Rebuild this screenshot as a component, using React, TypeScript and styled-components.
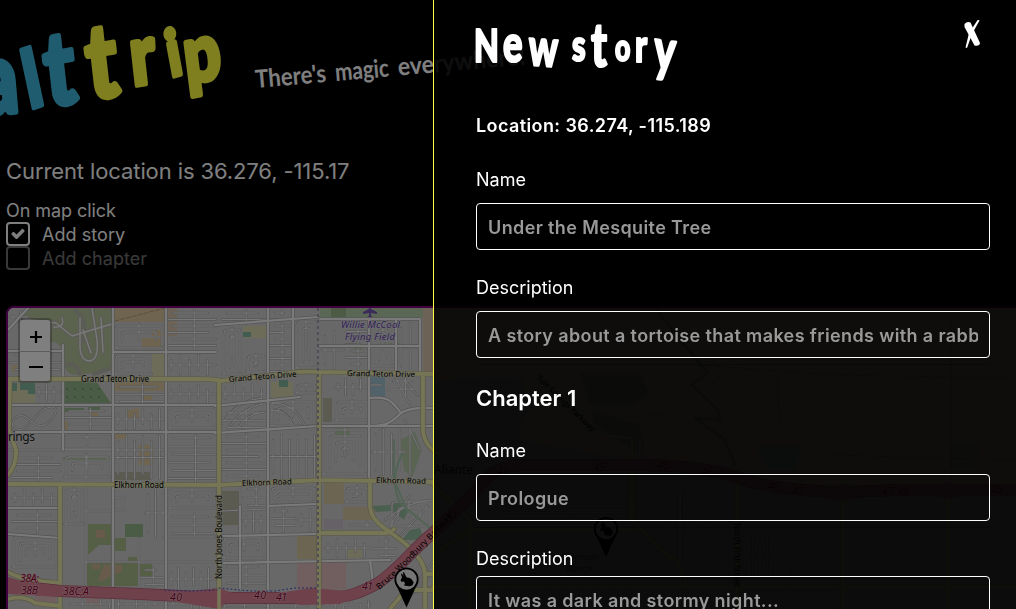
import React from "react";
import styled, { createGlobalStyle } from "styled-components";
import { FaCheck } from "react-icons/fa";

const GlobalStyle = createGlobalStyle`
  * { box-sizing: border-box; }
  html, body { margin: 0; background: #000; overflow: hidden; }
  body { font-family: Inter, sans-serif; color: #fff; }
`;

const Page = styled.main`
  height: 609px;
  overflow: hidden;
  display: flex;
  flex-direction: column;
`;
const Header = styled.header`
  height: 158px;
  flex: none;
`;
const Lettering = styled.svg`
  display: block;
  overflow: visible;
  font-family: Lato, sans-serif;
  font-weight: 900;
  stroke-linejoin: round;
`;
const Intro = styled.section`
  padding: 0 6px;
  height: 148px;
  flex: none;
`;
const Current = styled.p`
  margin: 0;
  font-size: 22px;
  line-height: 27px;
  letter-spacing: -0.1px;
`;
const Mode = styled.div`
  margin-top: 14px;
  font-size: 18px;
  line-height: 23px;
  letter-spacing: -0.06px;
`;
const Option = styled.label<{ $disabled?: boolean }>`
  display: flex;
  align-items: center;
  gap: 12px;
  height: 24px;
  letter-spacing: 0.05px;
  opacity: ${(p) => (p.$disabled ? 0.45 : 1)};
`;
const OptionText = styled.span`
  padding-top: 2px;
  line-height: 24px;
`;
const Box = styled.span`
  display: grid;
  place-items: center;
  width: 24px;
  height: 24px;
  border: 2px solid #fff;
  border-radius: 4px;
  font-size: 12px;
  line-height: 1;
  svg { stroke: #fff; stroke-width: 50; overflow: visible; }
`;
const MapFrame = styled.section`
  position: relative;
  margin-left: 6px;
  width: 1030px;
  height: 400px;
  flex: none;
  border: 2px solid purple;
  border-radius: 8px;
  overflow: hidden;
  background: #f0ecdc;
`;
const MapArt = styled.svg`
  display: block;
  font-family: "Noto Sans", sans-serif;
`;
const ZoomControl = styled.div`
  position: absolute;
  left: 10px;
  top: 10px;
  border: 2px solid rgba(0, 0, 0, 0.25);
  border-radius: 4px;
  background: #fff;
  background-clip: padding-box;
`;
const ZoomButton = styled.button`
  display: grid;
  place-items: center;
  width: 30px;
  height: 31px;
  padding: 2px 0 0 2px;
  border: 0;
  background: none;
  color: #000;
  & + & { height: 30px; padding-top: 0; border-top: 1px solid #bbb; }
`;
const Shade = styled.div`
  position: fixed;
  inset: 0;
  background: rgba(0, 0, 0, 0.5);
`;
const Drawer = styled.aside`
  position: fixed;
  top: 0;
  right: 0;
  bottom: 0;
  width: 583px;
  padding: 20px 26px 0 42px;
  border-left: 1px solid #ffff40;
  background: rgba(0, 0, 0, 0.89);
  overflow: hidden;
`;
const DrawerHead = styled.div`
  display: flex;
  justify-content: space-between;
  height: 92px;
`;
const Title = styled.h1`
  margin: 0;
`;
const Close = styled.button`
  width: 36px;
  height: 30px;
  padding: 0;
  border: 0;
  background: none;
`;
const Location = styled.p`
  margin: 0;
  height: 54px;
  font-size: 18px;
  font-weight: 600;
  line-height: 28px;
  letter-spacing: 0.4px;
`;
const Field = styled.div<{ $tight?: boolean }>`
  display: flex;
  flex-direction: column;
  gap: ${(p) => (p.$tight ? 5 : 11)}px;
  height: 108px;
`;
const Label = styled.label`
  font-size: 18px;
  line-height: 28px;
  height: 26px;
`;
const Input = styled.input`
  height: 47px;
  flex: none;
  padding: 2px 11px 0;
  border: 1px solid #fff;
  border-radius: 4px;
  background: none;
  font: 600 18px Inter, sans-serif;
  letter-spacing: 0.38px;
  color: #fff;
  outline: none;
  &::placeholder { color: #999; opacity: 1; }
`;
const Rule = styled.div`
  height: 1px;
  margin-top: -5px;
  background: rgba(0, 0, 0, 0.4);
`;
const Chapter = styled.h2`
  margin: 0;
  height: 55px;
  font-size: 22px;
  line-height: 32px;
  font-weight: 600;
`;

type G = [ch: string, x: number, y: number, size: number, rot?: number];

function Letters({ items, fill, sx = 1, stroke = 1 }: { items: G[]; fill: string; sx?: number; stroke?: number }) {
  return (
    <text fill={fill} stroke={fill} strokeWidth={stroke} transform={`scale(${sx} 1)`}>
      {items.map(([ch, x, y, size, rot = 0], i) => (
        <tspan key={i} x={x / sx} y={y} fontSize={size} rotate={rot}>{ch}</tspan>
      ))}
    </text>
  );
}

/* ---- map geometry ---- */
type Block = [x: number, y: number, w: number, h: number, kind: number];
const blocks: Block[] = [
  [10, 310, 18, 14, 0], [10, 352, 50, 24, 1], [114, 324, 50, 26, 2], [168, 310, 48, 40, 1],
  [114, 354, 38, 22, 2], [168, 354, 48, 22, 0], [36, 382, 24, 20, 0], [115, 384, 50, 20, 1],
  [168, 384, 48, 20, 0], [64, 408, 48, 22, 1], [115, 408, 50, 22, 0], [168, 408, 48, 22, 2],
  [62, 435, 50, 16, 2], [115, 435, 50, 45, 0], [168, 435, 50, 48, 1], [12, 455, 48, 26, 1],
  [64, 455, 46, 24, 2], [12, 488, 46, 20, 0], [12, 512, 46, 20, 1], [12, 535, 46, 34, 2],
  [64, 488, 20, 38, 2], [145, 488, 20, 50, 0], [168, 488, 48, 22, 2], [168, 514, 48, 22, 1],
  [168, 567, 48, 24, 0], [140, 567, 24, 22, 1], [70, 598, 145, 12, 0],
  [222, 310, 44, 14, 1], [222, 328, 20, 48, 2], [246, 354, 20, 20, 2], [270, 310, 22, 64, 1], [295, 320, 22, 50, 2],
  [222, 383, 44, 22, 0], [295, 383, 22, 12, 2], [222, 410, 44, 20, 1], [270, 400, 46, 28, 2],
  [222, 434, 44, 45, 1], [270, 434, 46, 45, 0], [322, 330, 22, 40, 0], [346, 322, 22, 48, 1],
  [371, 322, 24, 46, 2], [398, 322, 23, 50, 0], [335, 378, 34, 18, 0], [335, 400, 34, 22, 2],
  [388, 378, 32, 18, 1], [322, 428, 46, 48, 2], [372, 428, 34, 48, 0], [243, 486, 24, 20, 1],
  [243, 510, 24, 22, 0], [222, 536, 44, 24, 2], [222, 564, 44, 22, 1], [270, 486, 46, 18, 2],
  [270, 508, 25, 24, 1], [298, 508, 18, 24, 0], [345, 486, 24, 18, 2], [345, 522, 40, 9, 1],
  [325, 538, 48, 20, 0], [390, 500, 38, 28, 2], [374, 538, 22, 22, 1], [222, 603, 45, 8, 2],
  [270, 603, 46, 8, 1], [324, 600, 46, 10, 0],
  [440, 380, 82, 80, 2], [500, 490, 130, 36, 1], [640, 490, 92, 40, 0], [640, 535, 92, 45, 2],
  [742, 535, 96, 46, 0], [850, 535, 92, 46, 1], [742, 590, 96, 20, 2], [480, 590, 150, 20, 0], [480, 535, 70, 46, 1],
];
function lanes([x, y, w, h, kind]: Block, seed: number): string {
  let d = "";
  const step = 7.5 + (seed % 3) * 0.8;
  if (kind === 0) {
    for (let i = 0, a = x + 3; a < x + w - 1; a += step, i++) {
      d += `M${a} ${y + (i % 2 ? 1 : 6)}V${y + h - (i % 3 ? 1 : 6)}`;
    }
    d += `M${x} ${y + h / 2}H${x + w}`;
  } else if (kind === 1) {
    for (let i = 0, b = y + 3; b < y + h; b += step - 1, i++) {
      d += `M${x + (i % 2 ? 0 : 5)} ${b}H${x + w - (i % 3 ? 0 : 8)}`;
    }
    d += `M${x + w * 0.55} ${y}V${y + h}`;
  } else {
    const m = Math.min(w, h);
    for (let k = 2; k < m / 2; k += 6) {
      d += `M${x + k} ${y + h - k}V${y + k + 3}Q${x + k} ${y + k} ${x + k + 3} ${y + k}H${x + w - k}V${y + h - k - 2}`;
    }
    d += `M${x + w / 2} ${y}V${y + h * 0.6}M${x} ${y + h - 2}H${x + w}`;
  }
  return d;
}
const minor = blocks.map(lanes).join("") +
  "M12 428C12 415 22 412 30 420S46 428 54 416S46 404 36 416S24 432 14 428M8 450H216M86 454V590M86 511H112V590M86 562H215M139 538V590M166 537H215M114 498H124V510H114ZM222 424Q236 400 262 398M230 426Q242 408 262 404M238 428Q246 414 264 412M270 410Q288 408 294 428M270 403Q296 402 306 428M370 385H382M240 486V560M222 511L267 509M434 560L405 600M430 575L398 609M385 520Q410 500 433 500M390 526L410 495M400 536L428 506M400 375L418 396M394 375L410 405M405 420L420 450M410 430V475M380 430V475M440 465C460 435 520 440 540 390M455 380H520V420";
const major =
  "M63 345V450M63 351H8M113 308V609M166 308V609M8 405H216M8 432H216M113 352H216M8 508H60M8 534L60 538M215 325L318 317M268 308V609M293 308V370M369 319V480M396 320V370M320 319H420V372M215 406L300 397M215 433L318 426H433M369 398C390 396 392 402 401 413C390 424 385 426 369 426M401 413Q410 407 433 408M320 346H420M268 506L316 504M222 536L316 534M222 563L390 560M370 560L374 590M240 506V590M64 595H165L219 590M596 430Q610 438 632 438M8 330L28 308M640 438V464M680 490V609";
const primary =
  "M8 379H200Q216 379 220 381L290 373Q304 371 320 372L433 374M8 484L219 485L320 480L433 482M219 380V609M319 372V609M60 484V609M423 374V430Q424 446 440 455M370 480V505C370 525 392 530 410 548Q425 562 425 575V609M320 533H385Q392 533 394 529M10 379L9 430L16 450Q17 464 8 475M8 572Q20 580 60 583M8 599Q25 595 35 603L60 606M425 574H433M390 609L406 590H433M632 440V520L660 550Q685 562 685 585M433 484L470 520V609M440 550L470 530H632M433 587H1016M737 485V609M843 485V609M948 485V609";
const freeway = "M0 584L60 591L140 594L219 598H320C350 598 362 592 378 583C398 570 412 550 433 533L475 492Q492 466 520 465H650Q710 466 748 481Q780 490 841 492L897 490H1024";

const patches: [string, string][] = [
  ["M25 308H112V364Q110 374 98 372L80 375Q66 376 64 365V350L56 342H50L52 320L22 320Z", "#b6c49b"],
  ["M113 308H165V322H113ZM142 338H163V349H142ZM152 330H164V336H152ZM115 382H164V391H115ZM142 393H152V400H142ZM126 411L139 408V419H126ZM139 445H153V465H139ZM90 412H98V417H90ZM63 421H68V430H63ZM115 434H127V439H115ZM12 365H17V372H12Z", "#ddc89e"],
  ["M166 308H177V336H166Z", "#d8c6ad"],
  ["M62 381H96L111 403H62ZM64 408H84V412H64ZM88 407H100V412H88ZM125 524H143V537H125Z", "#94b88b"],
  ["M12 383H35V403H12ZM152 353H164V378H152ZM271 382H293V399H271ZM243 326H266V338H243ZM346 547H362V558H346Z", "#dad9b3"],
  ["M12 383H17V391H12ZM20 383H35V394H28V390H20ZM279 380H288V387H279ZM243 332H251V337H243Z", "#84b89f"],
  ["M88 524H112V545H99L88 555ZM114 538H126V551H114ZM87 563H138V586H87ZM140 564H152V577H140ZM128 557H137V562H128Z", "#abbf8d"],
  ["M96 530H105V538H96ZM92 564H100V569H92ZM104 565H122V572L112 575L103 581L98 580Z", "#d1b799"],
  ["M320 308H423V317H320Z", "#b5cea8"], ["M331 308H346V317H331Z", "#9bb78a"],
  ["M423 308H434V372H423Z", "#d8c6ad"],
  ["M371 376H385V397H371Z", "#a2c4d4"],
  ["M323 398H332V422H323ZM222 491H240V525H222ZM115 472H150V480H115Z", "#b7b6a2"],
  ["M324 482H344V504H324ZM343 507H375V520H343ZM297 536H318V559H297Z", "#d8caa2"],
  ["M297 562H346V589H297ZM35 594H56V603H35ZM86 598H101V606H86Z", "#e0bfbc"],
  ["M324 519H343V529H324Z", "#cdc3cf"],
  ["M335 428H350V435H335ZM354 344H362V353H354ZM380 343H402V348H380ZM400 440L415 432L422 450L412 478L404 470ZM63 457H110V460H63Z", "#b3cba5"],
  ["M402 540L410 530L420 528L424 540ZM372 506L390 505L400 500L408 510L404 520L392 511L376 512Z", "#96bea2"],
  ["M580 373H640L650 395L632 405H590ZM590 410L640 425L645 450H632L596 425Z", "#c6c9ae"],
  ["M755 446H800L796 470H768Z", "#c5d2dc"], ["M950 443H980V470H950Z", "#d0cdb9"],
];

type L = [text: string, x: number, y: number, len: number, rot?: number];
const roadNames: L[] = [
  ["Grand Teton Drive", 81, 382, 68, 0], ["Grand Teton Drive", 229, 382, 68, -4.5], ["Grand Teton Drive", 347, 376, 68, 1],
  ["Elkhorn Road", 114, 488, 50, 0], ["Elkhorn Road", 242, 486, 50, -2], ["Elkhorn Road", 376, 483, 50, 1],
  ["North Jones Boulevard", 222, 579, 84, -90], ["North Fifth Street", 734, 523, 64, 90],
  ["Tule Springs Parkway", 536, 378, 78, 44],
];
const exits: L[] = [
  ["38A;", 20, 582, 19], ["38B", 21, 594, 17], ["38C;A", 63, 595, 26], ["40", 170, 601, 12], ["40", 254, 599, 12], ["41", 276, 601, 11], ["41", 362, 590, 11],
  ["43", 446, 518, 11], ["43", 497, 475, 11], ["45", 594, 471, 11], ["45", 658, 469, 11], ["46", 701, 475, 11], ["46", 768, 490, 11],
  ["47", 792, 495, 11], ["47", 882, 495, 11], ["48", 898, 496, 11], ["48", 992, 494, 11],
];

function Pin({ x, y }: { x: number; y: number }) {
  return (
    <g transform={`translate(${x} ${y})`}>
      <path d="M-11 4L0 28L11 4Z" fill="#000" />
      <circle r="11.2" fill="#ededed" stroke="#000" strokeWidth="1.8" />
      <path d="M-3.600 -7.500Q-2 -7.500 -.8 -3.500L.4 -2Q5 -2 6.200 1.500L7.200 3L6 5.500Q4 7.300 1 6.500L-2.500 6L-1.500 4L-2.500 2L-4.800 2.200Q-6.500 1.500 -5.500 -.5L-4.500 -2L-5.500 -5.500L-4.600 -6L-3 -3.500Z" fill="#000" />
    </g>
  );
}

function StreetMap() {
  return (
    <MapArt width="1024" height="396" viewBox="8 308 1024 396" aria-label="Street map">
      <path d="M8 308H433L525 380L520 440L632 460H1030V704H8Z" fill="#d2d1d1" />
      <path d="M433 308H1030V490H800L700 465L632 460L600 430L525 380H433Z" fill="#f0ecdc" />
      {patches.map(([d, f], i) => <path key={i} d={d} fill={f} />)}
      <g fill="none" strokeLinecap="round" strokeLinejoin="round">
        <path d="M24 319L56 323L72 336L95 329L112 324M62 318Q65 328 54 327M80 318V345Q80 361 90 361Q99 359 97 340L92 308M83 330L91 353M101 318L103 352M64 366Q75 360 80 374M94 374L112 368M76 311Q88 320 84 341" stroke="#b9b9ae" strokeWidth="4" />
        <path d="M24 319L56 323L72 336L95 329L112 324M62 318Q65 328 54 327M80 318V345Q80 361 90 361Q99 359 97 340L92 308M83 330L91 353M101 318L103 352" stroke="#f0f0f0" strokeWidth="1.4" />
        <path d={minor} stroke="#b0afaf" strokeWidth="2.4" />
        <path d={minor} stroke="#f0f0f0" strokeWidth="1" />
        <path d={major} stroke="#aaa9a9" strokeWidth="3.6" />
        <path d={major} stroke="#f4f4f4" strokeWidth="2.2" />
        <path d="M402 454Q389 480 400 503L430 528M394 440V480L408 512" stroke="#a5c9ab" strokeWidth="2" />
        <path d={primary} stroke="#b0b086" strokeWidth="5.2" />
        <path d={primary} stroke="#ecebac" strokeWidth="3.8" />
        <path d={freeway} stroke="#b8607a" strokeWidth="12" />
        <path d={freeway} stroke="#dc8397" strokeWidth="10.5" />
        <path d="M8 577L40 586L60 597L8 594ZM165 594L219 588L235 594L219 609L165 600ZM270 594L312 588L350 591L378 583L340 604L300 605ZM600 464L632 459L664 464L632 470ZM800 492L841 484L880 490L841 501ZM912 490L948 482L982 490L948 499Z" fill="#dc8397" strokeLinecap="butt" />
        <path d="M219 584V609M319 584V609" stroke="#ecebac" strokeWidth="3.5" />
        <path d="M318 308V609" stroke="#a49caf" strokeWidth="2" strokeDasharray="3 3" strokeLinecap="butt" />
        <path d="M165 590L190 591L217 590M219 588L250 591L275 591L295 588H317" stroke="#3944cc" strokeWidth="1" strokeDasharray="1 3" />
        <path d="M115 321L165 308" stroke="#a98c66" strokeWidth=".7" strokeDasharray="4 2" />
        <path d="M660 308L700 345L722 372L705 395M592 420L660 415L700 455M700 365L830 375L1016 378M845 400L810 445M830 455L1016 460M951 320V480M777 380L780 425" stroke="#aba78c" strokeWidth="1" strokeDasharray="6 3" />
        <path d="M656 308L668 325L708 373L692 385L718 410L720 420L695 418L725 440L735 465" stroke="#bbb695" strokeWidth="3" />
      </g>
      <g fill="#54754e">
        {[389, 397].map((y) => [67, 75, 83, 91, 99].map((x) => <circle key={`${x}-${y}`} cx={x} cy={y} r=".7" />))}
      </g>
      <path d="M369 305L371 309L377 312V314L371 313V316L373 317H367L369 316V313L363 314V312L369 309Z" fill="#7556b5" />
      <g fontSize="8" fill="#000" stroke="#dddcc5" strokeWidth="1.2" paintOrder="stroke">
        {roadNames.map(([t, x, y, len, rot = 0], i) => (
          <text key={i} textLength={len} transform={`translate(${x} ${y}) rotate(${rot})`}>{t}</text>
        ))}
      </g>
      <g fontSize="10.5" fontStyle="italic" fill="#960032" stroke="#e4bcc4" strokeWidth="1.2" paintOrder="stroke">
        {exits.map(([t, x, y, len], i) => <text key={i} x={x} y={y} textLength={len}>{t}</text>)}
      </g>
      <g fontSize="9.5" fontStyle="italic" fill="#6040ac" stroke="#dcd9e2" strokeWidth="1" paintOrder="stroke">
        <text x="341" y="328" textLength="59">Willie McCool</text>
        <text x="345" y="340" textLength="50">Flying Field</text>
      </g>
      <path id="beltway" d="M379 590Q400 572 414 557T474 496" fill="none" />
      <text fontSize="8.5" fill="#000"><textPath href="#beltway" textLength="104">Bruce Woodbury Beltway</textPath></text>
      <g fontSize="12" fill="#222" stroke="#ddd" strokeWidth="1" paintOrder="stroke">
        <text x="8" y="440.500" textLength="27">rings</text>
        <text x="434" y="474" textLength="39">Aliante</text>
      </g>
      <g fontSize="9.500" fontStyle="italic" fill="#666">
        <text x="561" y="560" textLength="39">Eldorado</text>
        <text x="566" y="572">Ranch</text>
      </g>
      <Pin x={406.500} y={579.500} />
      <Pin x={606} y={529} />
    </MapArt>
  );
}

function SketchField({ label, hint, tight }: { label: string; hint: string; tight?: boolean }) {
  return (
    <Field $tight={tight}>
      <Label>{label}</Label>
      <Input placeholder={hint} aria-label={label} />
      <Rule />
    </Field>
  );
}

export default function App() {
  return (
    <>
      <GlobalStyle />
      <Page>
        <Header>
          <Lettering width="540" height="130" viewBox="0 0 540 130">
            <Letters fill="#40b8e0" sx={0.8} stroke={5} items={[["a", -21, 117, 102, -6], ["l", 30, 109, 80, -15], ["t", 48, 107, 103, -8]]} />
            <Letters fill="#ffff40" sx={0.8} stroke={5} items={[["t", 90, 100, 104, -8], ["r", 133, 86, 84, -8], ["i", 171, 77, 64, -13], ["p", 187, 84, 80, -9]]} />
            <g transform="translate(256 88) rotate(-5)" fontSize="25" fill="#fff" fontWeight="700">
              <text textLength="71" lengthAdjust="spacingAndGlyphs">There's</text>
              <text x="80" textLength="54" lengthAdjust="spacingAndGlyphs">magic</text>
              <text x="143" textLength="128" lengthAdjust="spacingAndGlyphs">everywhere!</text>
            </g>
          </Lettering>
        </Header>
        <Intro>
          <Current>Current location is 36.276, -115.17</Current>
          <Mode>
            On map click
            <Option><Box><FaCheck /></Box><OptionText>Add story</OptionText></Option>
            <Option $disabled><Box /><OptionText>Add chapter</OptionText></Option>
          </Mode>
        </Intro>
        <MapFrame>
          <StreetMap />
          <ZoomControl>
            <ZoomButton aria-label="Zoom in">
              <svg width="14" height="14"><path d="M1 7H13M7 1V13" stroke="#000" strokeWidth="2.2" /></svg>
            </ZoomButton>
            <ZoomButton aria-label="Zoom out">
              <svg width="14" height="14"><path d="M0 7H14" stroke="#000" strokeWidth="2.2" /></svg>
            </ZoomButton>
          </ZoomControl>
        </MapFrame>
      </Page>
      <Shade />
      <Drawer>
        <DrawerHead>
          <Title>
            <Lettering width="204" height="64" viewBox="476 20 204 64">
              <Letters fill="#fff" sx={0.7} stroke={2.2} items={[
                ["N", 474, 62, 46], ["e", 503, 62, 52], ["w", 528, 65, 52, 3], ["s", 572, 61, 44],
                ["t", 591, 67, 61], ["o", 615, 61, 38], ["r", 635, 62, 46], ["y", 653, 69, 58, 5],
              ]} />
            </Lettering>
          </Title>
          <Close aria-label="Close">
            <svg width="36" height="30" viewBox="954 20 36 30" fill="#fff">
              <path d="M964.500 24Q967 21 970.500 22.500L980 43Q979.500 46.500 974.500 45.500L971 39L964.500 27Z" />
              <path d="M978 19.500L979.500 20.500L972 34L967 48L965.500 47.500L969 33Z" />
            </svg>
          </Close>
        </DrawerHead>
        <Location>Location: 36.274, -115.189</Location>
        <SketchField label="Name" hint="Under the Mesquite Tree" />
        <SketchField label="Description" hint="A story about a tortoise that makes friends with a rabbit" />
        <Chapter>Chapter 1</Chapter>
        <SketchField label="Name" hint="Prologue" />
        <SketchField tight label="Description" hint="It was a dark and stormy night..." />
      </Drawer>
    </>
  );
}
